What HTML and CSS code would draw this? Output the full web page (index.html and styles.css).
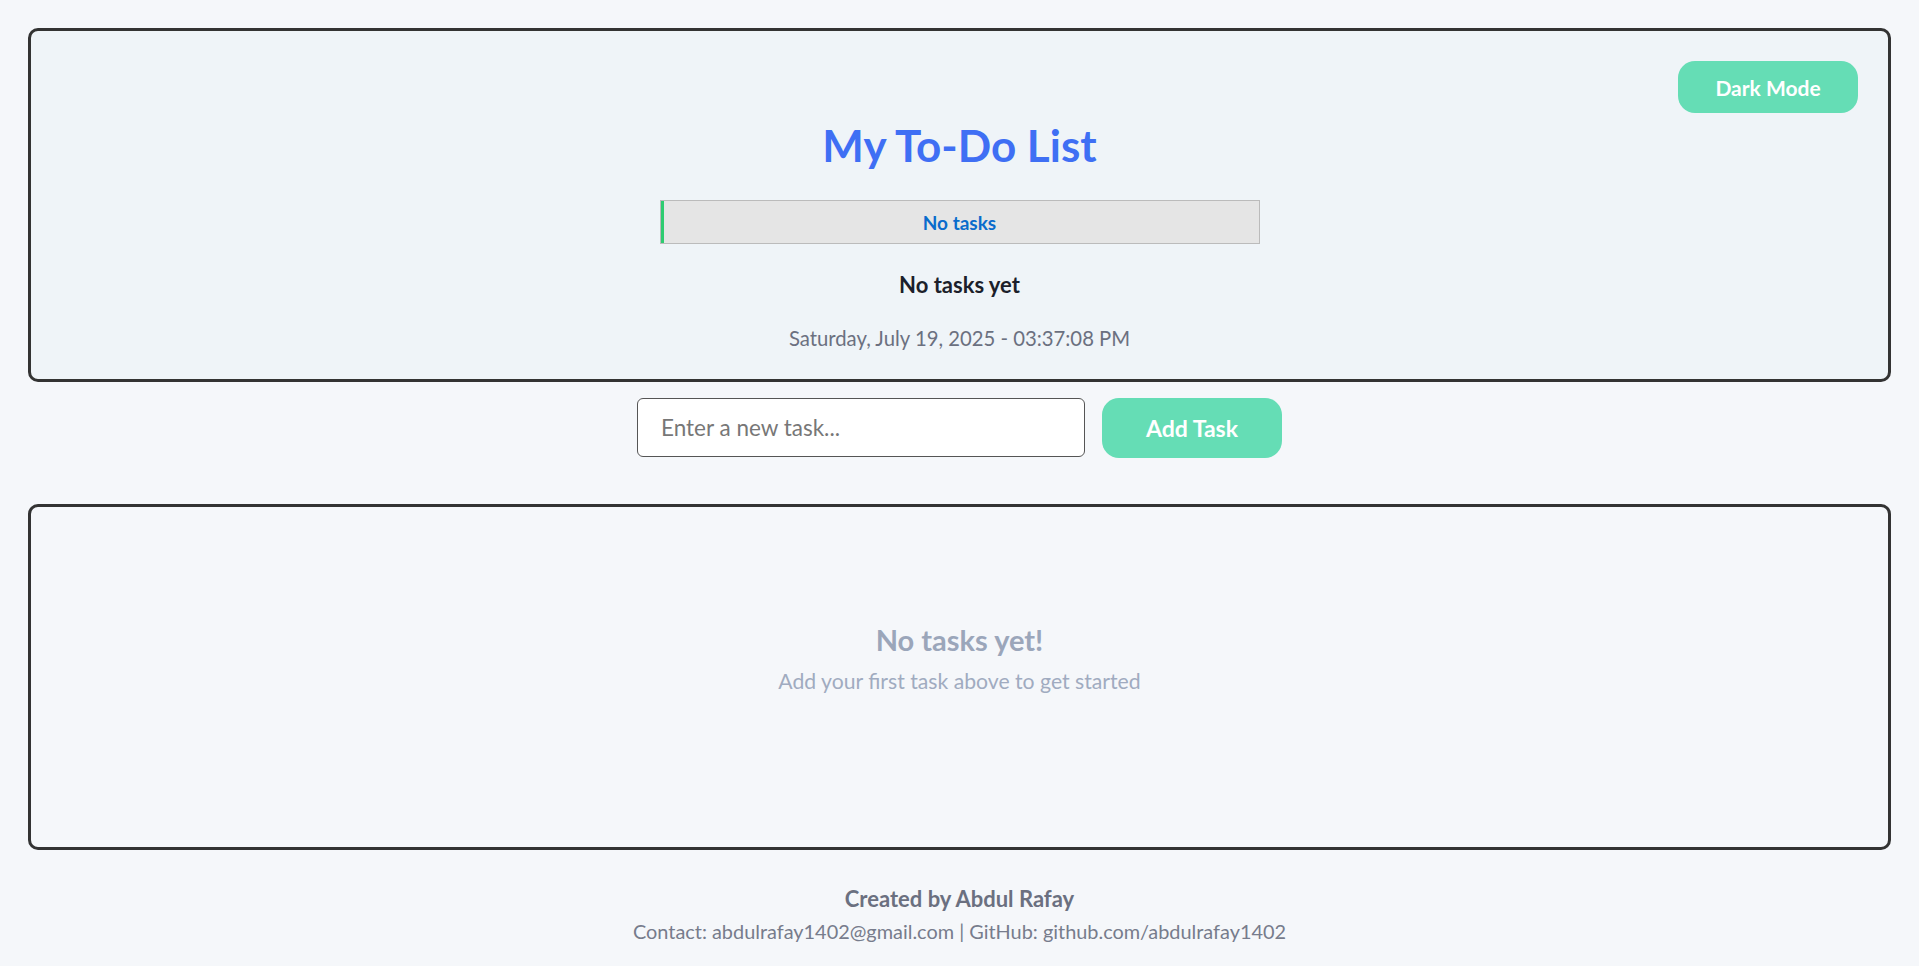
FILE: index.html
```html
<!DOCTYPE html>
<html lang="en">
<head>
<meta charset="utf-8">
<title>My To-Do List</title>
<link rel="stylesheet" href="styles.css">
</head>
<body>
  <header class="hero">
    <div class="hero-top">
      <button class="theme-toggle" type="button">Dark Mode</button>
    </div>
    <h1 class="title">My To-Do List</h1>
    <div class="progress">
      <div class="progress-fill" style="width: 3px"></div>
      <span class="progress-label">No tasks</span>
    </div>
    <p class="summary">No tasks yet</p>
    <p class="datetime">Saturday, July 19, 2025 - 03:37:08 PM</p>
  </header>

  <form class="add-row" onsubmit="return false">
    <input class="task-input" type="text" placeholder="Enter a new task...">
    <button class="add-btn" type="submit">Add Task</button>
  </form>

  <section class="task-list">
    <div class="empty">
      <h3 class="empty-title">No tasks yet!</h3>
      <p class="empty-text">Add your first task above to get started</p>
    </div>
  </section>

  <footer class="footer">
    <p class="footer-name">Created by Abdul Rafay</p>
    <p class="footer-contact">Contact: abdulrafay1402@gmail.com | GitHub: github.com/abdulrafay1402</p>
  </footer>
</body>
</html>
```

FILE: styles.css
```css
* { box-sizing: border-box; }

body {
  margin: 0;
  padding: 28px 28px 0;
  background: #f5f7fa;
  font-family: Lato, "Open Sans", sans-serif;
  color: #222;
}

.hero {
  display: flex;
  flex-direction: column;
  align-items: center;
  height: 354px;
  padding: 30px 30px 0;
  border: 3px solid #333;
  border-radius: 10px;
  background: #eff4f8;
}

.hero-top {
  align-self: stretch;
  display: flex;
  justify-content: flex-end;
}

.theme-toggle {
  width: 180px;
  height: 52px;
  padding: 0;
  border: none;
  border-radius: 17px;
  background: #65ddb5;
  color: #fff;
  font-family: inherit;
  font-size: 21px;
  font-weight: 700;
}

.title {
  margin: 2px 0 0;
  height: 60px;
  line-height: 60px;
  font-size: 44px;
  font-weight: 700;
  color: #3f6ff4;
}

.progress {
  position: relative;
  margin-top: 25px;
  width: 600px;
  height: 44px;
  border: 1px solid #bbb;
  background: #e5e5e5;
  display: flex;
  align-items: center;
  justify-content: center;
}

.progress-fill {
  position: absolute;
  left: 0;
  top: 0;
  bottom: 0;
  background: #2ecc71;
}

.progress-label {
  font-size: 19px;
  font-weight: 700;
  color: #0a6ccc;
}

.summary {
  margin: 29px 0 0;
  line-height: 24px;
  font-size: 22px;
  font-weight: 700;
  color: #1c1f2b;
}

.datetime {
  margin: 29px 0 0;
  line-height: 24px;
  font-size: 20.3px;
  color: #6b7080;
}

.add-row {
  display: flex;
  justify-content: center;
  gap: 17px;
  margin: 16px 0 0;
}

.task-input {
  width: 448px;
  height: 59px;
  padding: 0 23px;
  border: 1px solid #555;
  border-radius: 6px;
  background: #fff;
  font-family: inherit;
  font-size: 22.5px;
  color: #222;
}

.task-input::placeholder { color: #777; }

.add-btn {
  width: 180px;
  height: 60px;
  padding: 0;
  border: none;
  border-radius: 17px;
  background: #65ddb5;
  color: #fff;
  font-family: inherit;
  font-size: 23px;
  font-weight: 700;
}

.task-list {
  margin-top: 46px;
  height: 346px;
  border: 3px solid #333;
  border-radius: 10px;
  background: #f5f7fa;
}

.empty {
  padding-top: 118px;
  text-align: center;
}

.empty-title {
  margin: 0;
  line-height: 30px;
  font-size: 29px;
  font-weight: 700;
  color: #9ba6ba;
}

.empty-text {
  margin: 14px 0 0;
  line-height: 24px;
  font-size: 21.2px;
  color: #a0abc0;
}

.footer {
  margin-top: 37px;
  text-align: center;
}

.footer-name {
  margin: 0;
  line-height: 24px;
  font-size: 22px;
  font-weight: 700;
  color: #6b7080;
}

.footer-contact {
  margin: 8px 0 0;
  line-height: 24px;
  font-size: 19.9px;
  color: #777c8c;
}
```
